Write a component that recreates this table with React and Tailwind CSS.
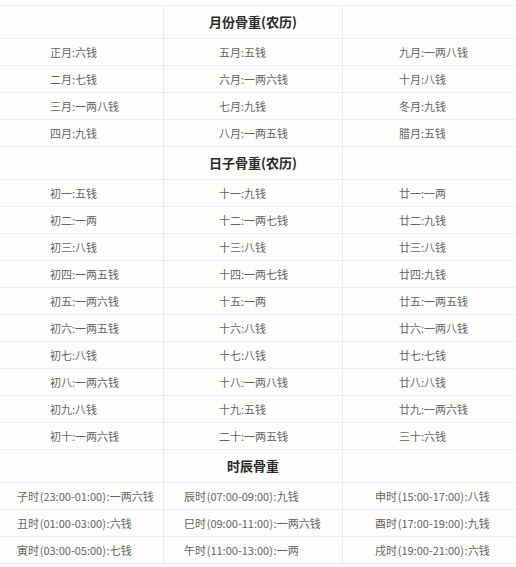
import React from 'react';

const months = [
  ['正月:六钱', '五月:五钱', '九月:一两八钱'],
  ['二月:七钱', '六月:一两六钱', '十月:八钱'],
  ['三月:一两八钱', '七月:九钱', '冬月:九钱'],
  ['四月:九钱', '八月:一两五钱', '腊月:五钱'],
];

const days = [
  ['初一:五钱', '十一:九钱', '廿一:一两'],
  ['初二:一两', '十二:一两七钱', '廿二:九钱'],
  ['初三:八钱', '十三:八钱', '廿三:八钱'],
  ['初四:一两五钱', '十四:一两七钱', '廿四:九钱'],
  ['初五:一两六钱', '十五:一两', '廿五:一两五钱'],
  ['初六:一两五钱', '十六:八钱', '廿六:一两八钱'],
  ['初七:八钱', '十七:八钱', '廿七:七钱'],
  ['初八:一两六钱', '十八:一两八钱', '廿八:八钱'],
  ['初九:八钱', '十九:五钱', '廿九:一两六钱'],
  ['初十:一两六钱', '二十:一两五钱', '三十:六钱'],
];

const hours = [
  ['子时\u200A(23:00-01:00)\u200A:一两六钱', '辰时\u200A(07:00-09:00)\u200A:九钱', '申时\u200A(15:00-17:00)\u200A:八钱'],
  ['丑时\u200A(01:00-03:00)\u200A:六钱', '巳时\u200A(09:00-11:00)\u200A:一两六钱', '酉时\u200A(17:00-19:00)\u200A:九钱'],
  ['寅时\u200A(03:00-05:00)\u200A:七钱', '午时\u200A(11:00-13:00)\u200A:一两', '戌时\u200A(19:00-21:00)\u200A:六钱'],
];

const HeaderRow = ({ title }) => (
  <>
    <div className="h-[33px] border-r border-b border-[#ebebeb]" />
    <div className="h-[33px] border-r border-b border-[#ebebeb] flex items-center justify-center text-[13px] font-bold text-[#2a2a2a]">
      {title}
    </div>
    <div className="h-[33px] border-b border-[#ebebeb]" />
  </>
);

// data cells: left-aligned text, offset per column
const DataRows = ({ rows, pads }) =>
  rows.map((row, i) => (
    <React.Fragment key={i}>
      {row.map((cell, j) => (
        <div
          key={j}
          className={`h-[27px] border-b border-[#ebebeb] flex items-center text-[11px] text-[#646464] whitespace-pre ${j < 2 ? 'border-r' : ''} ${pads[j]}`}
        >
          {cell}
        </div>
      ))}
    </React.Fragment>
  ));

export default function App() {
  return (
    <div
      className="w-[516px] h-[567px] overflow-hidden bg-[#fdfdfc] pt-[5px]"
      style={{ fontFamily: '"Noto Sans CJK SC", "Noto Sans", sans-serif' }}
    >
      <div className="grid grid-cols-[164px_179px_173px] border-t border-[#ebebeb]">
        <HeaderRow title="月份骨重(农历)" />
        <DataRows rows={months} pads={['pl-[50px]', 'pl-[55px]', 'pl-[56px]']} />
        <HeaderRow title="日子骨重(农历)" />
        <DataRows rows={days} pads={['pl-[50px]', 'pl-[55px]', 'pl-[56px]']} />
        <HeaderRow title="时辰骨重" />
        <DataRows rows={hours} pads={['pl-[17px]', 'pl-[20px]', 'pl-[32px]']} />
      </div>
    </div>
  );
}
